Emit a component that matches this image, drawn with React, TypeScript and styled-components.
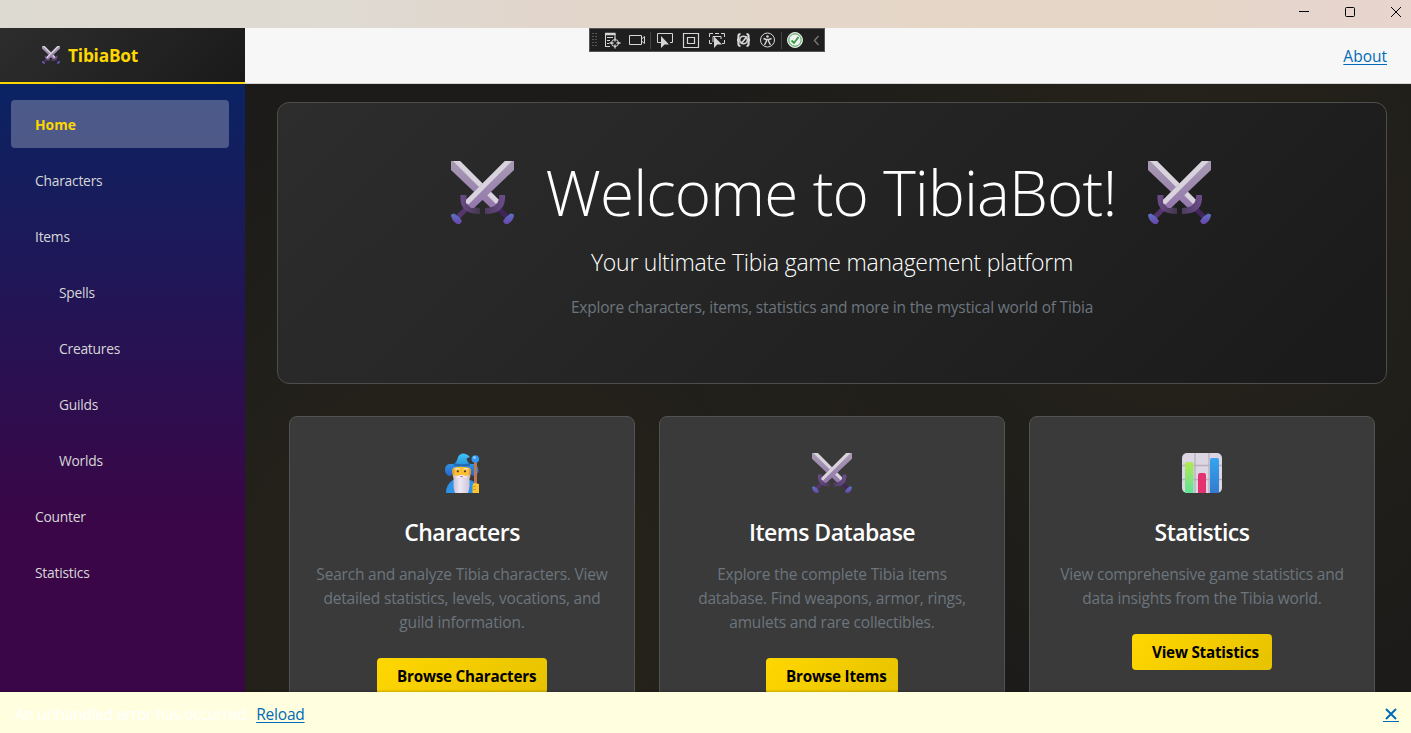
import React from "react";
import styled, { createGlobalStyle } from "styled-components";

const Global = createGlobalStyle`
  *{box-sizing:border-box}
  html,body{margin:0;height:100%;overflow:hidden}
  body{font-family:"Open Sans","Noto Sans",sans-serif;background:#1a1a1a;color:#fff}
`;
const Window = styled.div`height:733px;width:1411px;display:flex;flex-direction:column;position:relative;overflow:hidden;`;
const TitleBar = styled.div`height:28px;flex:none;display:flex;justify-content:flex-end;margin-right:-8px;background:linear-gradient(90deg,#dddad2,#dfdad2 25%,#e2d6cc 38%,#e4d7ca 55%,#e6d6c6 75%,#e6d6c8 85%,#e6d5cd 92%,#e7d5ce);`;
const WinButton = styled.span`width:46px;height:24px;display:flex;align-items:center;justify-content:center;`;
const Body = styled.div`flex:1;display:flex;min-height:0;`;
const Sidebar = styled.aside`width:245px;flex:none;background:linear-gradient(180deg,rgb(5,39,103) 0%,#3a0647 70%);`;
const Brand = styled.div`height:56px;display:flex;align-items:center;padding-left:42px;gap:8px;background:linear-gradient(135deg,#2d2d2d,#1a1a1a);border-bottom:2px solid #ffd700;color:#ffd700;`;
const Line = styled.span<{ $size: number; $ls?: number; $weight?: number }>`
  display:block;white-space:pre;font-size:${p => p.$size}px;letter-spacing:${p => p.$ls ?? 0}px;font-weight:${p => p.$weight ?? 400};
`;
const Nav = styled.nav`padding:16px 16px 0 11px;display:flex;flex-direction:column;gap:8px;`;
const NavLink = styled.a<{ $active?: boolean; $sub?: boolean }>`
  height:48px;border-radius:4px;display:flex;align-items:center;padding:0 0 0 ${p => (p.$sub ? 48 : 24)}px;
  color:${p => (p.$active ? "#ffd700" : "#d7d7d7")};background:${p => (p.$active ? "rgba(255,255,255,.26)" : "transparent")};
`;
const Main = styled.main`flex:1;min-width:0;display:flex;flex-direction:column;`;
const TopRow = styled.div`height:56px;flex:none;background:#f7f7f7;border-bottom:1px solid #d6d5d5;display:flex;align-items:center;justify-content:flex-end;padding-right:24px;`;
const Link = styled.a`color:#006bb7;text-decoration:underline;text-underline-offset:2px;text-decoration-thickness:1px;`;
const Content = styled.div`flex:1;min-height:0;overflow:hidden;padding:18px 24px 0 32px;
  background:radial-gradient(circle at 20% 80%,rgba(255,215,0,.05),transparent 50%),radial-gradient(circle at 80% 20%,rgba(255,215,0,.045),transparent 50%),#1c1b1a;`;
const Hero = styled.section`height:282px;border:1px solid #4d4d4a;border-radius:12px;background:linear-gradient(135deg,#2d2d2d,#1a1a1a);display:flex;flex-direction:column;align-items:center;padding-top:47px;`;
const TitleRow = styled.h1`margin:0 2px 0 0;height:84px;display:flex;align-items:center;gap:32px;`;
const Centered = styled.div<{ $h: number; $color?: string }>`height:${p => p.$h}px;display:flex;align-items:center;justify-content:center;color:${p => p.$color ?? "#fff"};`;
const Cards = styled.div`display:grid;grid-template-columns:repeat(3,346px);gap:24px;padding:0 12px;margin-top:32px;`;
const Card = styled.section`height:320px;border:1px solid #525252;border-radius:8px;background:#3a3a3a;display:flex;flex-direction:column;align-items:center;padding-top:36px;`;
const CardTitle = styled.h2`margin:23px 0 15px;height:31px;display:flex;align-items:center;`;
const CardText = styled.div`color:#6c757d;line-height:24px;display:flex;flex-direction:column;align-items:center;`;
const GoldButton = styled.a<{ $w: number }>`margin-top:24px;width:${p => p.$w}px;height:36px;border-radius:4px;background:linear-gradient(135deg,#ffd700,#e6c200);color:#000;display:flex;align-items:center;padding-left:20px;`;
const ErrorBar = styled.div`position:absolute;left:0;right:0;bottom:0;height:41px;background:#ffffe0;box-shadow:0 -1px 2px rgba(0,0,0,.2);display:flex;align-items:center;padding:3px 12px 0 15px;gap:6px;`;
const Dismiss = styled.a`margin-left:auto;width:16px;height:16px;border-bottom:1px solid #006bb7;display:flex;justify-content:center;align-items:center;`;
const DevBar = styled.div`position:absolute;left:589px;top:28px;width:236px;height:24px;background:#1f1f1f;border:1px solid #555;svg{display:block}`;

function Swords({ size }: { size: number }) {
  return (
    <svg width={size} height={size} viewBox="0 0 63 63">
      <defs>
        <linearGradient id="blade" x1="0" y1="0" x2="0" y2="1"><stop offset="0" stopColor="#a89bb2" /><stop offset="1" stopColor="#9478ad" /></linearGradient>
        <linearGradient id="guardL" x1="0" y1="0" x2="1" y2="0"><stop offset="0" stopColor="#6c4d8a" /><stop offset="1" stopColor="#43374d" /></linearGradient>
        <linearGradient id="guardR" x1="0" y1="0" x2="1" y2="0"><stop offset="0" stopColor="#4d3c60" /><stop offset="1" stopColor="#6c4d8a" /></linearGradient>
        <linearGradient id="pommel" x1="0" y1="0" x2="0" y2="1"><stop offset="0" stopColor="#5b74c4" /><stop offset="1" stopColor="#6b45ad" /></linearGradient>
      </defs>
      <path d="M47 47 56 56" stroke="#42245c" strokeWidth="5" />
      <path d="M16 47 7 56" stroke="#56356f" strokeWidth="5" />
      <path d="M0 0H9L48 39V42L44 47H40L0 9Z" fill="url(#blade)" />
      <path d="M2 0H9L48 39V41L45 43Z" fill="#d8d3dc" />
      <path d="M9.500 34H15.500V38Q17 47 29 47V53Q10 53 9.500 38Z" fill="url(#guardL)" />
      <path d="M54 34H48V38Q46 47 34 47V53Q53 53 54 38Z" fill="url(#guardR)" />
      <path d="M63 0H54L15 39V42L20 47H23L63 9Z" fill="url(#blade)" />
      <path d="M61 0H54L15 39V42L17.500 43.500Z" fill="#d8d3dc" />
      <path d="M0 53.500 3 52.500Q8 55 11 60L9 63H6Q0 59 0 53.500Z" fill="url(#pommel)" />
      <path d="M63 53.500 60 52.500Q55 55 52 60L54 63H57Q63 59 63 53.500Z" fill="url(#pommel)" />
    </svg>
  );
}
function Mage() {
  return (
    <svg width="40" height="40" viewBox="0 0 40 40">
      <defs>
        <linearGradient id="hat" x1="0" y1="0" x2="0" y2="1"><stop stopColor="#41c4f5" /><stop offset="1" stopColor="#2794dc" /></linearGradient>
        <linearGradient id="brim" x1="0" y1="0" x2="0" y2="1"><stop stopColor="#2e93e0" /><stop offset="1" stopColor="#2b62cc" /></linearGradient>
        <linearGradient id="beard" x1="0" y1="0" x2="1" y2="0"><stop stopColor="#c9bfd6" /><stop offset=".4" stopColor="#efe9f5" /><stop offset="1" stopColor="#cdc3d9" /></linearGradient>
      </defs>
      <path d="M4 40Q4 31 11 27H28Q36 29 36 40Z" fill="#2c93e6" />
      <path d="M7 11H33Q38 15 36 20Q34 24 30 22.500L26 18H12Q10 23 7 23Q3 21 3 17Q3 12 7 11Z" fill="url(#brim)" />
      <path d="M11 15Q19 12 28 15V24H11Z" fill="#fdc02f" />
      <path d="M10 16H12.500V25H11.500Q10 22 10 16ZM27 16H29Q29 22 28 25H26.500Z" fill="#e0a13a" />
      <path d="M13 16.300Q15 14.800 17.500 16.300M21.500 16.300Q24 14.800 26 16.300" stroke="#ece0d0" strokeWidth="1.200" fill="none" />
      <circle cx="15.800" cy="18.300" r="1.100" fill="#4a3342" /><circle cx="23" cy="18.300" r="1.100" fill="#4a3342" />
      <path d="M11.500 21.500Q15 24 19.500 22Q24 24 27.500 21.500V33Q27 37 26 40H13Q11.500 36 11.500 33Z" fill="url(#beard)" />
      <path d="M14.500 24.500Q17 22.500 19.500 22.500Q22 22.500 24.500 24.500" fill="none" stroke="#f6f2fa" strokeWidth="1.200" />
      <path d="M18 23.200H21Q19.500 25 18 23.200Z" fill="#b8324e" />
      <path d="M12 11Q15 9 16 4Q18 0 22 0.500Q26 1 28 4L24.500 5.500Q25 9 28 11Q20 13 12 11Z" fill="url(#hat)" />
      <path d="M12 10Q20 12.500 28 10V12.500Q20 14.500 11.500 12.500Z" fill="#2369b4" />
      <rect x="32" y="9" width="3" height="24" fill="#c07850" />
      <circle cx="33.300" cy="6" r="3.800" fill="#3398f5" /><circle cx="32.500" cy="4.600" r="1.500" fill="#84cbff" />
      <path d="M30.500 32Q31 30 33 30L37 31V40H30.500Z" fill="#fbc62f" /><path d="M31 33.500H34M31 36.500H34" stroke="#dc9a28" />
    </svg>
  );
}
function Chart() {
  return (
    <svg width="40" height="40" viewBox="0 0 40 40">
      <defs><linearGradient id="green" x1="0" y1="0" x2="0" y2="1"><stop stopColor="#b4e854" /><stop offset="1" stopColor="#5fe39a" /></linearGradient>
        <linearGradient id="blue" x1="0" y1="0" x2="0" y2="1"><stop stopColor="#35a5ef" /><stop offset="1" stopColor="#327bd0" /></linearGradient></defs>
      <rect width="40" height="40" rx="5" fill="#dcd5e2" />
      <path d="M0 12.500H40M0 26.500H40M13 0V40M27 0V40" stroke="#b7b0bd" strokeWidth="1.300" />
      <path d="M3 40V11Q3 9 5 9H9.500Q11.500 9 11.500 11V40Z" fill="url(#green)" />
      <path d="M16 40V22Q16 20 18 20H22Q24 20 24 22V40Z" fill="#e23370" />
      <path d="M28 40V7Q28 5 30 5H35Q37 5 37 7V40Z" fill="url(#blue)" />
    </svg>
  );
}
function DevIcons() {
  return (
    <svg width="234" height="22" viewBox="0 0 234 22" fill="none" stroke="#d6d6d6">
      <path d="M3 4V19M6 4V19" stroke="#555" strokeDasharray="1 2" strokeWidth="2" />
      <g transform="translate(-1 0)">
        <path d="M26 4.500V9M16.500 4V18M16 17.500H21M18 8.500H24M18 11.500H21M18 14.500H20" />
        <path d="M16 5H26.500" strokeWidth="2.500" />
        <circle cx="26" cy="14" r="3.500" /><path d="M26 8.500V12.500M26 15.500V19.500M20.500 14H24.500M27.500 14H31.500" strokeWidth="1.300" />
      </g>
      <path d="M39.500 6.500H51.500V15.500H39.500ZM51.500 10 54.500 7.500V14.500L51.500 12" />
      <path d="M60.500 3V20M191.500 3V20" stroke="#444" />
      <path d="M71 13.500H67.500V4.500H82.500V13.500H80" /><path d="M71 7V19L74.500 15.500H79Z" fill="#d6d6d6" stroke="none" />
      <path d="M93.500 4.500H108.500V18.500H93.500ZM97.500 8.500H104.500V14.500H97.500Z" strokeWidth="1.200" />
      <path d="M119.500 8V4.500H123M131 4.500H134.500V8M119.500 11V14.500H122M134.500 11V14.500H132M123 13V7.500H131V10M125 4.500H129" /><path d="M124 7.500V19L127.300 15.500H132Z" fill="#d6d6d6" stroke="none" />
      <path d="M150.500 5Q148 5 148.500 8Q148.500 11 147 11Q148.500 11 148.500 14Q148 17 150.500 17M156.500 5Q159 5 158.500 8Q158.500 11 160 11Q158.500 11 158.500 14Q159 17 156.500 17" strokeWidth="2.200" />
      <circle cx="153.500" cy="11" r="3.800" strokeWidth="1.500" /><path d="M150.500 13.500 152.500 13 157 7.500" strokeWidth="1.600" />
      <circle cx="177.500" cy="11" r="7" /><circle cx="177.500" cy="7.500" r="1.300" fill="#d6d6d6" stroke="none" /><path d="M173.500 9.500 176 10.500H179L181.500 9.500M176.500 10.500V12L174.500 16M178.500 10.500V12L180.500 16" strokeWidth="1.400" />
      <circle cx="205" cy="11" r="7.500" fill="#f2f2f2" stroke="#e5e5e5" /><circle cx="205" cy="11" r="6.200" stroke="#3aa546" /><path d="M201.500 11.500 204 14 208.500 8" stroke="#2f9e3d" strokeWidth="1.800" />
      <path d="M228.500 7 224.500 11.500 228.500 16" stroke="#777" strokeWidth="1.400" />
    </svg>
  );
}

const nav: { t: string; sub?: boolean; active?: boolean }[] = [
  { t: "Home", active: true }, { t: "Characters" }, { t: "Items" }, { t: "Spells", sub: true }, { t: "Creatures", sub: true },
  { t: "Guilds", sub: true }, { t: "Worlds", sub: true }, { t: "Counter" }, { t: "Statistics" },
];
const cards = [
  { icon: <Mage />, title: "Characters", lines: ["Search and analyze Tibia characters. View", "detailed statistics, levels, vocations, and", "guild information."], btn: "Browse Characters", w: 170 },
  { icon: <Swords size={40} />, title: "Items Database", lines: ["Explore the complete Tibia items", "database. Find weapons, armor, rings,", "amulets and rare collectibles."], btn: "Browse Items", w: 132 },
  { icon: <Chart />, title: "Statistics", lines: ["View comprehensive game statistics and", "data insights from the Tibia world."], btn: "View Statistics", w: 140 },
];

export default function App() {
  return (
    <Window>
      <Global />
      <TitleBar>
        <WinButton><svg width="10" height="10"><path d="M0 4.500H10" stroke="#000" /></svg></WinButton>
        <WinButton><svg width="10" height="10"><rect x=".5" y=".5" width="9" height="9" rx="1" fill="none" stroke="#000" /></svg></WinButton>
        <WinButton><svg width="10" height="10"><path d="M0 0 10 10M10 0 0 10" stroke="#000" /></svg></WinButton>
      </TitleBar>
      <Body>
        <Sidebar>
          <Brand><Swords size={18} /><Line $size={17.3} $ls={-0.2} $weight={700}>TibiaBot</Line></Brand>
          <Nav>{nav.map(n => <NavLink key={n.t} $active={n.active} $sub={n.sub}><Line $size={13.8} $ls={n.active ? 0.05 : -0.22} $weight={n.active ? 700 : 400}>{n.t}</Line></NavLink>)}</Nav>
        </Sidebar>
        <Main>
          <TopRow><Link><Line $size={15.5}>About</Line></Link></TopRow>
          <Content>
            <Hero>
              <TitleRow><Swords size={63} /><Line $size={62} $ls={-0.88} $weight={310}>Welcome to TibiaBot!</Line><Swords size={63} /></TitleRow>
              <Centered $h={56}><Line $size={23} $ls={-0.26} $weight={340}>Your ultimate Tibia game management platform</Line></Centered>
              <Centered $h={34} $color="#6c757d"><Line $size={15.5} $ls={-0.2}>Explore characters, items, statistics and more in the mystical world of Tibia</Line></Centered>
            </Hero>
            <Cards>
              {cards.map(c => (
                <Card key={c.title}>
                  {c.icon}
                  <CardTitle><Line $size={23} $ls={-0.5} $weight={600}>{c.title}</Line></CardTitle>
                  <CardText>{c.lines.map(l => <Line key={l} $size={15.5} $ls={-0.2}>{l}</Line>)}</CardText>
                  <GoldButton $w={c.w}><Line $size={15.2} $ls={-0.2} $weight={700}>{c.btn}</Line></GoldButton>
                </Card>
              ))}
            </Cards>
          </Content>
        </Main>
      </Body>
      <DevBar><DevIcons /></DevBar>
      <ErrorBar>
        <Line $size={15.5} $ls={-0.3}>An unhandled error has occurred.</Line>
        <Link><Line $size={15.5} $ls={-0.2}>Reload</Line></Link>
        <Dismiss><svg width="12" height="12"><path d="M1 1 11 11M11 1 1 11" stroke="#006bb7" strokeWidth="2" /></svg></Dismiss>
      </ErrorBar>
    </Window>
  );
}
